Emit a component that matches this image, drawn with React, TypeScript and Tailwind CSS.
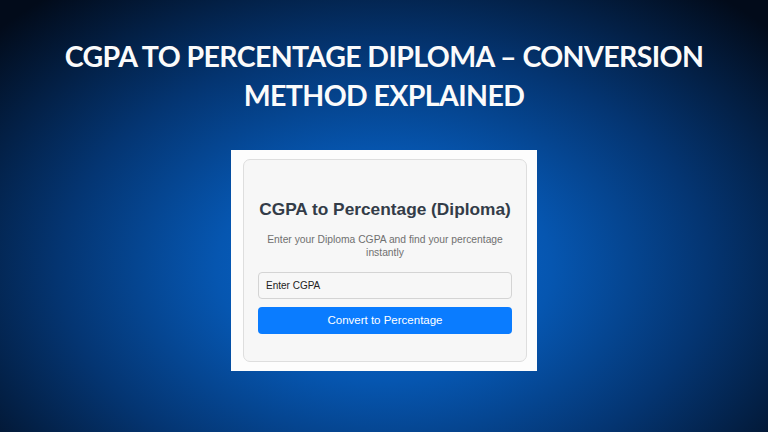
export default function App() {
  return (
    <div className="w-[768px] h-[432px] overflow-hidden flex flex-col items-center bg-[radial-gradient(ellipse_68%_82%_at_50%_62%,#0b6cd9_0%,#0656b0_32%,#043572_62%,#020b1a_100%)]">
      <h1 className="mt-[37px] text-center text-[#fbfbfb] font-bold uppercase text-[28.5px] leading-[39px] font-['Lato',sans-serif] tracking-[-0.6px]">
        CGPA to Percentage Diploma – Conversion
        <br />
        Method Explained
      </h1>

      <div className="mt-[35px] w-[306px] h-[221px] bg-[#fdfdfd] p-[9px_10px_9px_12px]">
        <div className="h-full rounded-[7px] border border-[#dedede] bg-[#f7f7f7] flex flex-col items-center px-[14px] pt-[38px] font-['Liberation_Sans',Arial,sans-serif]">
          <h2 className="whitespace-nowrap text-[17.3px] font-bold text-[#333c48] leading-[22px]">
            CGPA to Percentage (Diploma)
          </h2>
          <p className="mt-[14px] text-center text-[10.3px] leading-[12.5px] text-[#707070]">
            Enter your Diploma CGPA and find your percentage instantly
          </p>
          <input
            type="text"
            placeholder="Enter CGPA"
            className="mt-[13px] w-full h-[27px] rounded-[4px] border border-[#d4d4d4] bg-[#f7f7f7] px-[7px] text-[10px] placeholder:text-[#222] outline-none"
          />
          <button className="mt-[8px] w-full h-[27px] rounded-[4px] bg-[#0a7cff] text-white text-[11.5px]">
            Convert to Percentage
          </button>
        </div>
      </div>
    </div>
  );
}
